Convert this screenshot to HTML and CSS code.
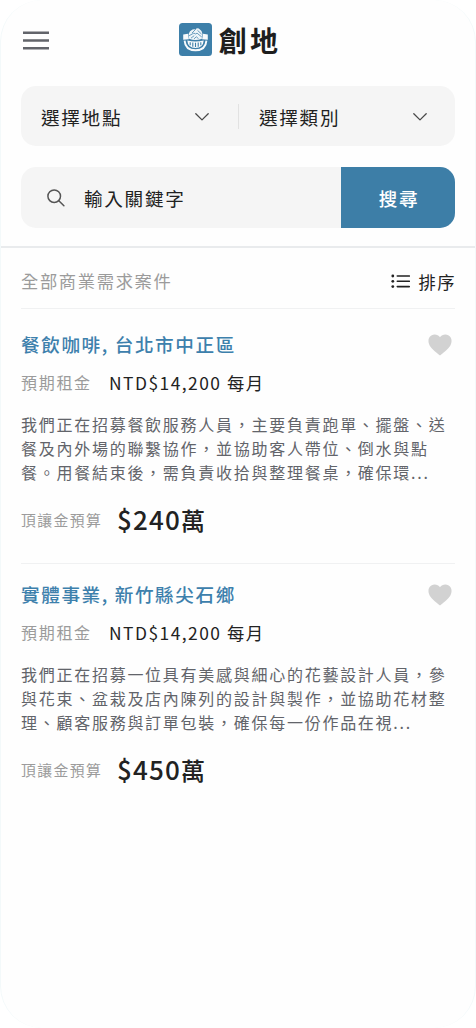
FILE: index.html
```html
<!DOCTYPE html>
<html lang="zh-Hant">
<head>
<meta charset="utf-8">
<meta name="viewport" content="width=device-width, initial-scale=1">
<title>創地</title>
<link rel="stylesheet" href="styles.css">
</head>
<body>
<div class="screen">
  <header class="header">
    <button class="menu" aria-label="選單">
      <svg class="menu-icon" viewBox="0 0 26 19"><path d="M0 1.700h26M0 9.500h26M0 17.300h26"/></svg>
    </button>
    <div class="brand">
      <svg class="logo" viewBox="0 0 33 33">
        <rect width="33" height="33" rx="3.5" fill="#3d7fa9"/>
        <path d="M4.200 11.600l4.700-.900 1 5.600-5.700.400zM28.800 11.600l-4.700-.900-1 5.600 5.700.400z" fill="#f7fafc"/>
        <path d="M9.500 11.200q1-3.600 4-4.600 1.600-.600 2.900-.100 1.500-2 3.400-.900 3.300 2 3.700 5.500l-.600 4.600q-6.400 2.600-12.800 0z" fill="#edf4f8"/>
        <path d="M10.500 12.500l4.400-2.400q1.500 1.600 3.200.1l4.400 3.600M16.400 6.600l-3.200 3.200M18.800 7.600l3.400 3.200M12.300 14.900l2.600-2M15.300 15.600l2-1.800 1.900 1.600" fill="none" stroke="#3d7fa9" stroke-width=".75" stroke-linecap="round"/>
        <path d="M5.600 17.600q.6 9.400 10.900 9.700 10.300-.3 10.900-9.700" fill="none" stroke="#f7fafc" stroke-width="1.900"/>
        <path d="M8.300 17.400q8.200 2 16.400 0-.5 7.300-8.200 7.600-7.700-.3-8.200-7.600z" fill="#f7fafc"/>
        <path d="M11.200 19.300v3M13.800 19.600v4.100M16.500 19.700v4.300M19.200 19.600v4.100M21.800 19.300v3" stroke="#3d7fa9" stroke-width="1.100"/>
      </svg>
      <span class="brand-name">創地</span>
    </div>
  </header>

  <section class="filters">
    <div class="selects">
      <div class="select">選擇地點<svg class="chevron" viewBox="0 0 14 8"><path d="M.8.8L7 6.9 13.2.8"/></svg></div>
      <div class="select">選擇類別<svg class="chevron" viewBox="0 0 14 8"><path d="M.8.8L7 6.9 13.2.8"/></svg></div>
    </div>
    <div class="search">
      <div class="search-field">
        <svg class="search-icon" viewBox="0 0 18 18"><circle cx="7.2" cy="7.2" r="6.3"/><path d="M11.8 11.8l5.1 5"/></svg>
        <span>輸入關鍵字</span>
      </div>
      <button class="search-button">搜尋</button>
    </div>
  </section>

  <main class="list">
    <div class="toolbar">
      <h1 class="list-title">全部商業需求案件</h1>
      <button class="sort">
        <svg class="sort-icon" viewBox="0 0 19 15"><path d="M6.3 2h12M6.3 7.3h12M6.3 12.6h12"/><circle cx="1.8" cy="2" r="1.4"/><circle cx="1.8" cy="7.3" r="1.4"/><circle cx="1.8" cy="12.6" r="1.4"/></svg>
        <span>排序</span>
      </button>
    </div>

    <article class="card">
      <div class="card-head">
        <h2 class="card-title">餐飲咖啡, 台北市中正區</h2>
        <svg class="heart" viewBox="0 0 24 22"><path d="M12 21.4C10 20 3.5 15.2 1.5 11.3-.4 7.5.3 3.4 3.3 1.6 6.3-.2 10 .5 12 3.300c2-2.800 5.700-3.500 8.700-1.700 3 1.800 3.700 5.900 1.800 9.700C20.500 15.200 14 20 12 21.400z"/></svg>
      </div>
      <div class="rent"><span class="rent-label">預期租金</span><span class="rent-value">NTD$14,200 每月</span></div>
      <p class="description">我們正在招募餐飲服務人員，主要負責跑單、擺盤、送<br>餐及內外場的聯繫協作，並協助客人帶位、倒水與點<br>餐。用餐結束後，需負責收拾與整理餐桌，確保環...</p>
      <div class="budget"><span class="budget-label">頂讓金預算</span><span class="budget-value">$240<span class="unit">萬</span></span></div>
    </article>

    <article class="card">
      <div class="card-head">
        <h2 class="card-title">實體事業, 新竹縣尖石鄉</h2>
        <svg class="heart" viewBox="0 0 24 22"><path d="M12 21.4C10 20 3.5 15.2 1.5 11.3-.4 7.5.3 3.4 3.3 1.6 6.3-.2 10 .5 12 3.300c2-2.800 5.700-3.500 8.700-1.700 3 1.800 3.700 5.900 1.800 9.700C20.500 15.200 14 20 12 21.400z"/></svg>
      </div>
      <div class="rent"><span class="rent-label">預期租金</span><span class="rent-value">NTD$14,200 每月</span></div>
      <p class="description">我們正在招募一位具有美感與細心的花藝設計人員，參<br>與花束、盆栽及店內陳列的設計與製作，並協助花材整<br>理、顧客服務與訂單包裝，確保每一份作品在視...</p>
      <div class="budget"><span class="budget-label">頂讓金預算</span><span class="budget-value">$450<span class="unit">萬</span></span></div>
    </article>
  </main>
</div>
</body>
</html>
```
FILE: styles.css
```css
* { box-sizing: border-box; }
body {
  margin: 0;
  background: #fff;
  color: #222;
  font-family: "Noto Sans CJK TC", "Noto Sans", sans-serif;
}
button { border: 0; padding: 0; background: none; color: inherit; font: inherit; letter-spacing: inherit; }
h1, h2, p { margin: 0; font-weight: 400; }
svg { display: block; flex: none; }

.screen {
  height: 1028px;
  overflow: hidden;
  border: 1px solid #f3f9fa;
  border-width: 0 1px;
  border-radius: 42px;
  background: #fefefe;
}

.header {
  display: grid;
  grid-template-columns: 1fr auto 1fr;
  align-items: center;
  height: 86px;
  padding: 0 38px 6px 22px;
}
.menu { width: 26px; }
.menu-icon { width: 26px; height: 19px; stroke: #62646a; stroke-width: 2.5; }
.brand { display: flex; align-items: center; gap: 7px; }
.logo { width: 33px; height: 33px; margin-top: -1px; }
.brand-name { font-size: 28px; font-weight: 700; line-height: 40px; letter-spacing: 3.3px; color: #1e1e1e; }

.filters {
  display: flex;
  flex-direction: column;
  gap: 21px;
  height: 162px;
  padding: 0 20px;
  border-bottom: 2px solid #e9ebed;
}
.selects { display: flex; height: 60px; border-radius: 15px; background: #f5f5f5; }
.select {
  display: flex;
  flex: 1;
  align-items: center;
  justify-content: space-between;
  padding: 0 29px 0 20px;
  font-size: 18.6px;
  letter-spacing: 1.7px;
  position: relative;
}
.select + .select { padding: 0 28px 0 21px; }
.select + .select::before {
  content: "";
  position: absolute;
  left: 0;
  top: 18px;
  width: 1px;
  height: 25px;
  background: #e2e2e2;
}
.chevron { width: 14px; height: 8px; margin-top: 1px; fill: none; stroke: #4a4a4a; stroke-width: 1.3; stroke-linecap: round; stroke-linejoin: round; }
.search { display: flex; height: 61px; overflow: hidden; border-radius: 15px; background: #f5f5f5; }
.search-field { display: flex; flex: 1; align-items: center; gap: 19px; padding: 0 0 0 26px; font-size: 18.6px; letter-spacing: 1.7px; }
.search-icon { width: 18px; height: 18px; fill: none; stroke: #555; stroke-width: 1.5; stroke-linecap: round; }
.search-button { width: 114px; padding: 0 0 1px 2px; background: #3d7ea7; color: #fff; font-size: 18.6px; font-weight: 500; letter-spacing: 1.7px; }

.list { padding: 0 20px; }
.toolbar { display: flex; justify-content: space-between; align-items: center; height: 61px; padding-top: 6px; border-bottom: 1px solid #f0f1f2; }
.list-title { margin-top: -2px; font-size: 17.3px; letter-spacing: 1.65px; color: #9b9b9b; }
.sort { display: flex; align-items: center; gap: 8px; font-size: 17.3px; letter-spacing: 1.5px; margin-right: -1px; }
.sort-icon { width: 19px; height: 15px; fill: #222; }
.sort-icon path { stroke: #222; stroke-width: 1.6; stroke-linecap: round; }

.card { height: 254px; padding-top: 20px; }
.card + .card { height: auto; padding-top: 15px; border-top: 1px solid #f0f1f2; }
.card-head { display: flex; justify-content: space-between; align-items: center; height: 30px; padding-right: 3px; }
.card-title { margin-top: -1px; font-size: 18.6px; font-weight: 500; letter-spacing: 1.6px; color: #3d80ac; }
.heart { width: 24px; height: 22px; margin-top: 1px; fill: #d2d2d2; }
.rent { display: flex; align-items: center; height: 26px; margin-top: 10px; }
.rent-label { width: 88px; font-size: 16px; letter-spacing: 1.7px; color: #9b9b9b; }
.rent-value { font-size: 17.4px; letter-spacing: 1.48px; }
.description { margin-top: 17px; font-size: 16px; line-height: 24.1px; letter-spacing: 1.73px; white-space: nowrap; color: #62646a; }
.budget { display: flex; align-items: center; height: 40px; margin-top: 15px; }
.budget-label { width: 96px; padding-top: 1px; font-size: 14.8px; letter-spacing: 1.45px; color: #9b9b9b; }
.budget-value { margin-top: -2px; font-size: 26px; font-weight: 500; letter-spacing: 1.2px; }
.unit { font-size: 24px; }
```
